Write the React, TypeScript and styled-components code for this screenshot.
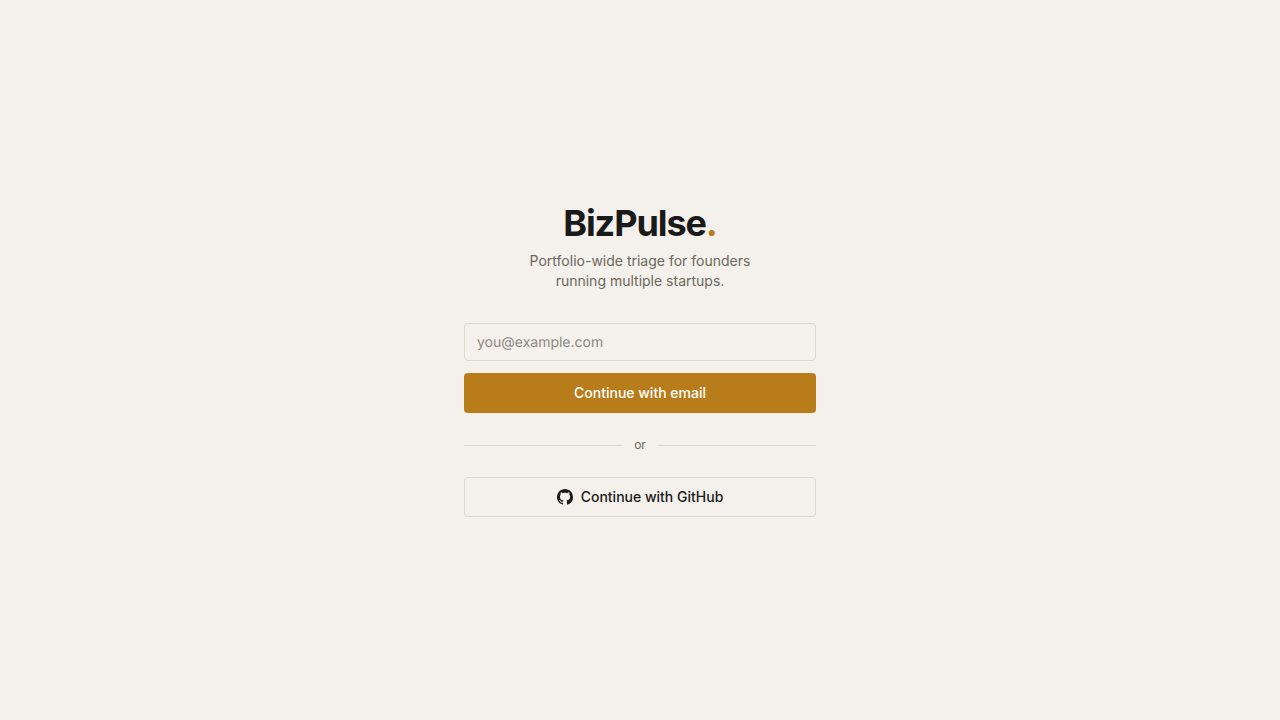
import React from 'react';
import styled, { createGlobalStyle } from 'styled-components';

const GlobalStyle = createGlobalStyle`
  *, *::before, *::after { box-sizing: border-box; }
  body {
    margin: 0;
    background: #f4f0eb;
    color: #1a1a1a;
    font-family: Inter, "Liberation Sans", sans-serif;
    font-size: 14px;
    line-height: 20px;
    -webkit-font-smoothing: antialiased;
  }
`;

const Page = styled.main`
  min-height: 100vh;
  display: flex;
  align-items: center;
  justify-content: center;
  padding: 16px;
`;

const Panel = styled.div`
  width: 100%;
  max-width: 352px;
`;

const Header = styled.header`
  text-align: center;
  margin-bottom: 32px;
`;

const Brand = styled.h1`
  margin: 0 0 8px;
  font-size: 36px;
  line-height: 40px;
  font-weight: 700;
  letter-spacing: -0.03em;
`;

const Accent = styled.span`
  color: #b87c1a;
`;

const Tagline = styled.p`
  margin: 0 auto;
  max-width: 240px;
  color: #6b6860;
`;

const EmailForm = styled.form`
  display: flex;
  flex-direction: column;
  gap: 12px;
`;

const EmailInput = styled.input`
  width: 100%;
  height: 38px;
  padding: 8px 12px;
  border: 1px solid #dcd9d3;
  border-radius: 4px;
  background: transparent;
  color: inherit;
  font: inherit;
  text-rendering: geometricPrecision;
  &::placeholder { color: #8a8882; opacity: 1; }
`;

const Button = styled.button<{ $outline?: boolean }>`
  width: 100%;
  height: 40px;
  display: flex;
  align-items: center;
  justify-content: center;
  gap: 8px;
  border: ${(p) => (p.$outline ? '1px solid #dcd9d3' : '0')};
  border-radius: 4px;
  background: ${(p) => (p.$outline ? 'transparent' : '#b87c1a')};
  color: ${(p) => (p.$outline ? '#1a1a1a' : '#ffffff')};
  font: inherit;
  font-weight: 500;
  cursor: pointer;
`;

const Divider = styled.div`
  display: flex;
  align-items: center;
  gap: 12px;
  margin: 24px 0;
  color: #6b6860;
  font-size: 12px;
  line-height: 16px;
  &::before, &::after {
    content: '';
    flex: 1;
    height: 1px;
    background: #dcd9d3;
  }
`;

const GitHubMark = () => (
  <svg width="16" height="16" viewBox="0 0 16 16" fill="currentColor" aria-hidden="true">
    <path d="M8 0C3.58 0 0 3.58 0 8c0 3.54 2.29 6.53 5.47 7.59.4.07.55-.17.55-.38 0-.19-.01-.82-.01-1.49-2.01.37-2.53-.49-2.69-.94-.09-.23-.48-.94-.82-1.13-.28-.15-.68-.52-.01-.53.63-.01 1.08.58 1.23.82.72 1.21 1.87.87 2.33.66.07-.52.28-.87.51-1.07-1.78-.2-3.64-.89-3.64-3.95 0-.87.31-1.59.82-2.15-.08-.2-.36-1.02.08-2.12 0 0 .67-.21 2.2.82.64-.18 1.32-.27 2-.27s1.36.09 2 .27c1.53-1.04 2.2-.82 2.2-.82.44 1.1.16 1.92.08 2.12.51.56.82 1.27.82 2.15 0 3.07-1.87 3.75-3.65 3.95.29.25.54.73.54 1.48 0 1.07-.01 1.93-.01 2.2 0 .21.15.46.55.38A8.01 8.01 0 0 0 16 8c0-4.42-3.58-8-8-8z" />
  </svg>
);

export default function App() {
  return (
    <>
      <GlobalStyle />
      <Page>
        <Panel>
          <Header>
            <Brand>BizPulse<Accent>.</Accent></Brand>
            <Tagline>Portfolio-wide triage for founders running multiple startups.</Tagline>
          </Header>
          <EmailForm onSubmit={(e) => e.preventDefault()}>
            <EmailInput type="email" name="email" aria-label="Email address" placeholder="you@example.com" />
            <Button type="submit">Continue with email</Button>
          </EmailForm>
          <Divider>or</Divider>
          <Button type="button" $outline>
            <GitHubMark />
            Continue with GitHub
          </Button>
        </Panel>
      </Page>
    </>
  );
}
